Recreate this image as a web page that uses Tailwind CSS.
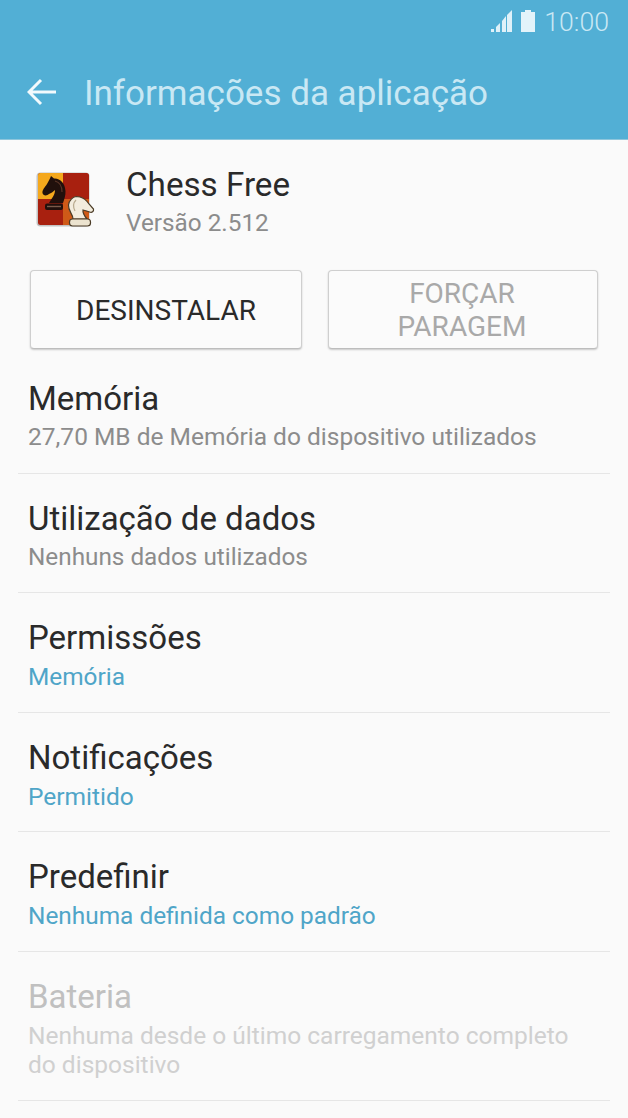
<!DOCTYPE html>
<html lang="pt">
<head>
  <meta charset="UTF-8" />
  <meta name="viewport" content="width=device-width, initial-scale=1.0" />
  <title>Informações da aplicação</title>
  <script src="https://cdn.jsdelivr.net/npm/@tailwindcss/browser@4"></script>
</head>
<body class="h-[1118px] overflow-hidden bg-[#fafafa] font-['Roboto',sans-serif]">
  <!-- Header -->
  <header class="h-[140px] bg-[#52afd5] border-b border-[#8fc6dc]">
    <div class="h-[44px] flex items-center justify-end pr-[19px]">
      <svg width="22" height="22" viewBox="0 0 22 22" class="mt-[-2px]" fill="#dff1f9">
        <rect x="0" y="19" width="3" height="3" />
        <path d="M5 17 L9 13 V22 H5 Z" />
        <path d="M11 11 L15 6 V22 H11 Z" />
        <path d="M16 5 L21 0 V22 H16 Z" />
      </svg>
      <svg width="14" height="22" viewBox="0 0 14 22" class="ml-[8px] mt-[-2px]" fill="#e3f3fa">
        <path d="M4 0 H10 V2 H14 V22 H0 V2 H4 Z" />
      </svg>
      <span class="ml-[9px] text-[26.7px] leading-none text-[#c9e8f4] font-light">10:00</span>
    </div>
    <div class="h-[95px] flex items-center pl-[27px]">
      <svg width="30" height="30" viewBox="0 0 30 30" fill="none" stroke="#f2fafd" stroke-width="3" class="mt-[1px]">
        <path d="M29 15 H3 M14 3 L2 15 L14 27" />
      </svg>
      <h1 class="ml-[27px] mt-[3px] text-[35px] leading-none text-[#c9e8f4] font-normal">Informações da aplicação</h1>
    </div>
  </header>

  <!-- App info -->
  <section class="h-[130px] flex pl-[32px]">
    <svg width="64" height="64" viewBox="0 0 64 64" class="mt-[28px] shrink-0">
      <rect x="4.5" y="4.5" width="53" height="54" rx="4" fill="#000" opacity="0.22" />
      <rect x="6" y="5" width="51" height="52" rx="2.5" fill="#a8200f" />
      <path d="M6 7.5 A2.5 2.5 0 0 1 8.5 5 H31 V31 H6 Z" fill="#f5a81c" />
      <path d="M31 31 H57 V54.5 A2.5 2.5 0 0 1 54.5 57 H31 Z" fill="#cf5a18" />
      <!-- black knight -->
      <path d="M10.5 25 C10 22 13 19 15 16 C16.5 13 18 11 19 8 L22 10.5 C28 10 33 15 33.5 23 C33.8 27 32 32 31 35 H17 C20 30 23 27 23 22 C21 24 19 25 17 26 C15 28 11 28 10.5 25 Z" fill="#21100c" />
      <path d="M23 13 C27 14 30 18 30 24" fill="none" stroke="#5a3426" stroke-width="1.2" />
      <rect x="13" y="35.5" width="18" height="6.5" rx="2" fill="#21100c" />
      <rect x="15" y="37.8" width="14" height="1.4" fill="#7a5a4a" />
      <!-- white knight -->
      <path d="M41 51 C41 46 36 43 36.5 37 C37 32 41 29 44 28.5 L48 29 C52 30 55 33 57 36 L61.5 41 C62 43.5 60 45 57.5 44 C55 43 53 42.5 51 42 C50.5 45 52.5 48 55 51 Z" fill="#f3ecdd" stroke="#4a3b26" stroke-width="1.2" />
      <path d="M44 32 C41 35 41 39 43 43" fill="none" stroke="#b9ab8f" stroke-width="1.2" />
      <rect x="37.5" y="51" width="21" height="7" rx="3" fill="#ece3cf" stroke="#4a3b26" stroke-width="1.2" />
    </svg>
    <div class="ml-[30px] pt-[26px]">
      <div class="text-[33.2px] leading-[38px] text-[#2a2a2a]">Chess Free</div>
      <div class="mt-[1px] text-[24.3px] leading-[36px] text-[#8c8c8c]">Versão 2.512</div>
    </div>
  </section>

  <!-- Buttons -->
  <div class="flex gap-[26px] pl-[30px] pr-[30px] pb-[10px]">
    <button class="w-[272px] h-[79px] pt-[1px] rounded-[4px] border border-[#cfcfcf] border-b-[#bdbdbd] shadow-[0_1px_2px_rgba(0,0,0,0.2)] bg-[#fbfbfb] text-[28px] leading-[33px] text-[#2a2a2a]">DESINSTALAR</button>
    <button class="w-[270px] h-[79px] pr-[2px] rounded-[4px] border border-[#cfcfcf] border-b-[#bdbdbd] shadow-[0_1px_2px_rgba(0,0,0,0.2)] bg-[#fbfbfb] text-[28px] leading-[33px] text-[#a9a9a9]">FORÇAR<br />PARAGEM</button>
  </div>

  <!-- Items -->
  <ul class="mx-[18px]">
    <li class="h-[115px] border-b border-[#e6e6e6] pl-[10px] pt-[20px]">
      <div class="text-[33px] leading-[39px] text-[#2a2a2a]">Memória</div>
      <div class="text-[24.5px] leading-[38px] text-[#8c8c8c]">27,70 MB de Memória do dispositivo utilizados</div>
    </li>
    <li class="h-[119px] border-b border-[#e6e6e6] pl-[10px] pt-[25px]">
      <div class="text-[33px] leading-[39px] text-[#2a2a2a]">Utilização de dados</div>
      <div class="text-[24.3px] leading-[38px] text-[#8c8c8c]">Nenhuns dados utilizados</div>
    </li>
    <li class="h-[120px] border-b border-[#e6e6e6] pl-[10px] pt-[25px]">
      <div class="text-[33px] leading-[40px] text-[#2a2a2a]">Permissões</div>
      <div class="text-[24.4px] leading-[38px] text-[#4fa5c8]">Memória</div>
    </li>
    <li class="h-[119px] border-b border-[#e6e6e6] pl-[10px] pt-[25px]">
      <div class="text-[33px] leading-[40px] text-[#2a2a2a]">Notificações</div>
      <div class="text-[24.5px] leading-[38px] text-[#4fa5c8]">Permitido</div>
    </li>
    <li class="h-[120px] border-b border-[#e6e6e6] pl-[10px] pt-[25px]">
      <div class="text-[33px] leading-[40px] text-[#2a2a2a]">Predefinir</div>
      <div class="text-[24.4px] leading-[38px] text-[#4fa5c8]">Nenhuma definida como padrão</div>
    </li>
    <li class="h-[149px] border-b border-[#e6e6e6] pl-[10px] pt-[25px]">
      <div class="text-[33px] leading-[39px] text-[#c0c0c0]">Bateria</div>
      <div class="text-[24.5px] leading-[29px] mt-[5px] text-[#d0d0d0]">Nenhuma desde o último carregamento completo<br />do dispositivo</div>
    </li>
  </ul>
</body>
</html>
